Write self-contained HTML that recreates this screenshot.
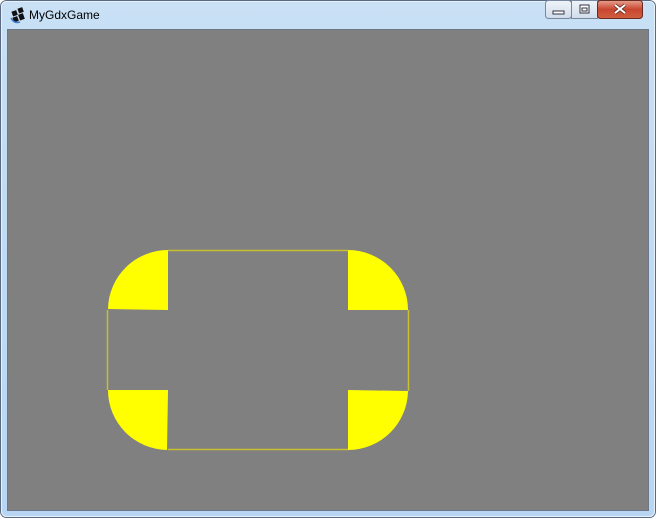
<!DOCTYPE html>
<html><head><style>
html,body{margin:0;padding:0;width:656px;height:518px;overflow:hidden;background:#fff}
</style></head><body>
<svg width="656" height="518" xmlns="http://www.w3.org/2000/svg">
<defs>
<linearGradient id="tb" x1="0" y1="0" x2="0" y2="1">
<stop offset="0" stop-color="#c9e0f5"/><stop offset="1" stop-color="#b8d6f3"/>
</linearGradient>
<linearGradient id="cl" x1="0" y1="0" x2="0" y2="1">
<stop offset="0" stop-color="#e8a090"/><stop offset="0.5" stop-color="#c8452f"/><stop offset="1" stop-color="#d06040"/>
</linearGradient>
<linearGradient id="bt" x1="0" y1="0" x2="0" y2="1">
<stop offset="0" stop-color="#f0f4fa"/><stop offset="1" stop-color="#d0dcea"/>
</linearGradient>
</defs>
<rect x="0.5" y="0.5" width="655" height="517" rx="6" fill="url(#tb)" stroke="#5a6a80"/>
<rect x="1.5" y="1.5" width="653" height="515" rx="5" fill="none" stroke="#e6f1fb"/>
<rect x="7" y="29" width="642" height="482" fill="#6a7888"/>
<rect x="8" y="30" width="640" height="480" fill="#808080"/>
<g>
<rect x="12" y="11" width="5" height="5" fill="#111" transform="rotate(-20 14 13)"/>
<rect x="18" y="8" width="5" height="5" fill="#111" transform="rotate(-20 20 10)"/>
<rect x="13" y="17" width="5" height="5" fill="#111" transform="rotate(-20 15 19)"/>
<rect x="19" y="14" width="5" height="6" fill="#111" transform="rotate(-20 21 17)"/>
<path d="M11 18 Q14 24 20 22" stroke="#3a7ad0" stroke-width="1.5" fill="none"/>
</g>
<text x="29" y="19" font-family="Liberation Sans, sans-serif" font-size="12" fill="#000">MyGdxGame</text>
<rect x="545.5" y="0.5" width="26" height="18" rx="3" fill="url(#bt)" stroke="#7788a0"/>
<rect x="553" y="11" width="11" height="3" fill="#fff" stroke="#334" stroke-width="1"/>
<rect x="571.5" y="0.5" width="26" height="18" fill="url(#bt)" stroke="#7788a0"/>
<rect x="580" y="5" width="9" height="8" fill="#fff" stroke="#334"/>
<rect x="582" y="8" width="5" height="3" fill="none" stroke="#334"/>
<rect x="597.5" y="0.5" width="45" height="18" rx="3" fill="url(#cl)" stroke="#6b2a20"/>
<path d="M615 5 L625 13 M625 5 L615 13" stroke="#5a2a22" stroke-width="3.5"/>
<path d="M615 5 L625 13 M625 5 L615 13" stroke="#fff" stroke-width="2"/>
<path d="M168 250 L168 310 L108 309 A60 60 0 0 1 168 250 Z" fill="#ffff00"/>
<path d="M348 250 L348 310 L408 310 A60 60 0 0 0 348 250 Z" fill="#ffff00"/>
<path d="M168 390 L167 450 A60 60 0 0 1 108 390 Z" fill="#ffff00"/>
<path d="M348 390 L348 450 A60 60 0 0 0 408 391 Z" fill="#ffff00"/>
<path d="M168 250.5 H348 M408.5 310 V391 M348 449.5 H168 M107.5 390 V310" stroke="#c8c030" stroke-width="1.5" fill="none"/>
</svg>
</body></html>
